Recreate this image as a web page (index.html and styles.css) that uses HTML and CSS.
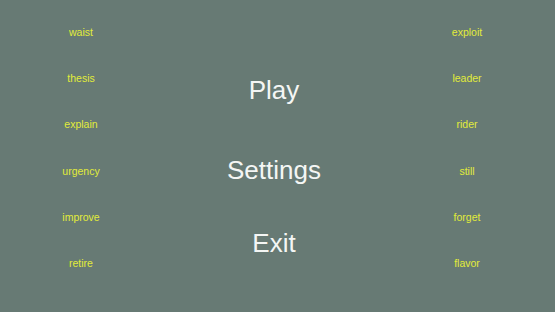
FILE: index.html
```html
<!DOCTYPE html>
<html>
<head>
<meta charset="utf-8">
<link rel="stylesheet" href="styles.css">
</head>
<body>
<div class="screen">
  <div class="side">
    <div class="word">waist</div>
    <div class="word">thesis</div>
    <div class="word">explain</div>
    <div class="word">urgency</div>
    <div class="word">improve</div>
    <div class="word">retire</div>
  </div>
  <div class="menu">
    <div class="item play">Play</div>
    <div class="item settings">Settings</div>
    <div class="item exit">Exit</div>
  </div>
  <div class="side">
    <div class="word">exploit</div>
    <div class="word">leader</div>
    <div class="word">rider</div>
    <div class="word">still</div>
    <div class="word">forget</div>
    <div class="word">flavor</div>
  </div>
</div>
</body>
</html>
```

FILE: styles.css
```css
html, body {
  margin: 0;
  padding: 0;
  background: #677a74;
}
.screen {
  width: 555px;
  height: 312px;
  display: grid;
  grid-template-columns: 162px 224px 162px;
  font-family: "Liberation Sans", Arial, sans-serif;
}
.side {
  display: flex;
  flex-direction: column;
  padding-top: 9px;
}
.word {
  height: 46.2px;
  display: flex;
  align-items: center;
  justify-content: center;
  color: #e2ec3a;
  font-size: 10.5px;
}
.menu {
  display: flex;
  flex-direction: column;
  align-items: center;
}
.item {
  color: #f4f6f4;
  font-size: 26px;
  height: 40px;
  line-height: 40px;
}
.play { margin-top: 70px; }
.settings { margin-top: 40px; }
.exit { margin-top: 33px; }
```
